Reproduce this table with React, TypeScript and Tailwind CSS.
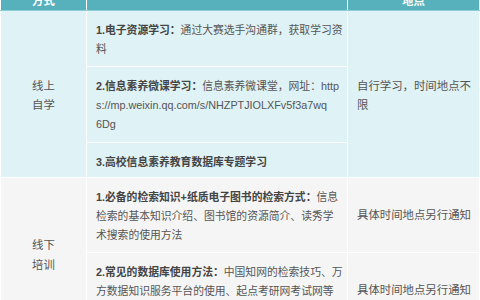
import React from 'react'

const cyan = 'bg-[#dff2f5]'
const gray = 'bg-[#f5f5f5]'

// each entry is one visual line; bold prefix only on the first one
function Lines({ lines, bold }: { lines: string[]; bold?: string }) {
  return (
    <div className="whitespace-nowrap text-[10.8px]">
      {lines.map((l, i) => (
        <div key={i} className="h-[19px] leading-[19px]">
          {i === 0 && bold && <b className="font-bold text-[#444]">{bold}</b>}
          {l}
        </div>
      ))}
    </div>
  )
}

export default function App() {
  const td = 'border border-white align-middle'
  const body = 'border border-white align-top pl-[9px] pt-[10px]'
  return (
    <div className="w-[480px] h-[300px] overflow-hidden bg-white">
      <table
        className="w-[480px] -mt-[10px] table-fixed border-collapse text-[11.4px] leading-[19px] text-[#555]"
        style={{ fontFamily: '"Liberation Sans", "Noto Sans CJK SC", sans-serif' }}
      >
        <colgroup>
          <col className="w-[86px]" />
          <col className="w-[261px]" />
          <col />
        </colgroup>
        <thead>
          <tr className="bg-[#56b1bc] text-white font-bold h-[20px]">
            <th className={`${td} border-b-[#8fd0d8] text-center leading-[16px]`}>方式</th>
            <th className={`${td} border-b-[#8fd0d8]`}></th>
            <th className={`${td} border-b-[#8fd0d8] text-center leading-[16px]`}>地点</th>
          </tr>
        </thead>
        <tbody>
          <tr className={`${cyan} h-[56px]`}>
            <td rowSpan={3} className={`${td} text-center pt-[4px]`}>
              线上
              <br />
              自学
            </td>
            <td className={body}>
              <Lines bold="1.电子资源学习：" lines={['通过大赛选手沟通群，获取学习资', '料']} />
            </td>
            <td rowSpan={3} className={`${td} pl-[9px] pr-[3px] pt-[4px]`}>
              自行学习，时间地点不限
            </td>
          </tr>
          <tr className={`${cyan} h-[76px]`}>
            <td className={body}>
              <Lines
                bold="2.信息素养微课学习："
                lines={['信息素养微课堂，网址：http', 's://mp.weixin.qq.com/s/NHZPTJIOLXFv5f3a7wq', '6Dg']}
              />
            </td>
          </tr>
          <tr className={`${cyan} h-[35px]`}>
            <td className={body}>
              <Lines bold="3.高校信息素养教育数据库专题学习" lines={['']} />
            </td>
          </tr>
          <tr className={`${gray} h-[75px]`}>
            <td rowSpan={2} className={`${td} text-center pt-[4px] leading-[20px]`}>
              线下
              <br />
              培训
            </td>
            <td className={body}>
              <Lines
                bold="1.必备的检索知识+纸质电子图书的检索方式："
                lines={['信息', '检索的基本知识介绍、图书馆的资源简介、读秀学', '术搜索的使用方法']}
              />
            </td>
            <td className={`${td} pl-[9px] pr-[3px]`}>具体时间地点另行通知</td>
          </tr>
          <tr className={`${gray} h-[76px]`}>
            <td className={body}>
              <Lines
                bold="2.常见的数据库使用方法："
                lines={['中国知网的检索技巧、万', '方数据知识服务平台的使用、起点考研网考试网等', '数据库的使用方法']}
              />
            </td>
            <td className={`${td} pl-[9px] pr-[3px]`}>具体时间地点另行通知</td>
          </tr>
        </tbody>
      </table>
    </div>
  )
}
